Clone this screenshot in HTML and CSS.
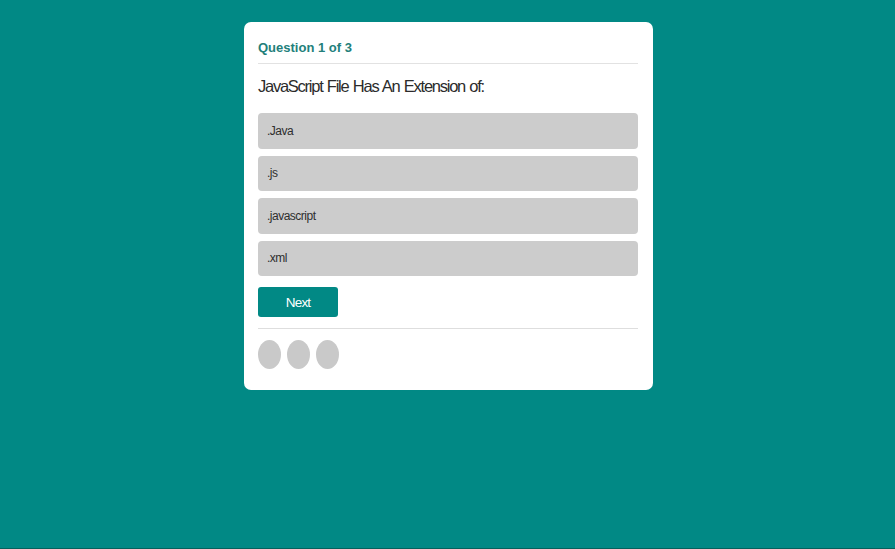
FILE: index.html
```html
<!DOCTYPE html>
<html lang="en">
<head>
<meta charset="utf-8">
<title>Quiz</title>
<link rel="stylesheet" href="styles.css">
</head>
<body>
<main class="page">
  <section class="card">
    <div class="qnum">Question 1 of 3</div>
    <h1 class="qtext">JavaScript File Has An Extension of:</h1>
    <ul class="options">
      <li class="option">.Java</li>
      <li class="option">.js</li>
      <li class="option">.javascript</li>
      <li class="option">.xml</li>
    </ul>
    <button class="next" type="button">Next</button>
    <div class="dots">
      <span class="dot"></span>
      <span class="dot"></span>
      <span class="dot"></span>
    </div>
  </section>
</main>
</body>
</html>
```
FILE: styles.css
```css
* { box-sizing: border-box; }
html, body {
  margin: 0;
  padding: 0;
  height: 100%;
}
body {
  background: #018985;
  font-family: "Liberation Sans", Arial, sans-serif;
  color: #333;
}
.page {
  display: flex;
  justify-content: center;
  padding: 22px 0 0 2px;
  height: 100%;
  border-bottom: 1px solid #04615d;
}
.card {
  width: 409px;
  height: 368px;
  background: #fff;
  border-radius: 7px;
  padding: 17px 15px 21px 14px;
  display: flex;
  flex-direction: column;
}
.qnum {
  font-size: 13px;
  font-weight: bold;
  color: #237f7b;
  line-height: 18px;
  padding-bottom: 6px;
  border-bottom: 1px solid #e2e2e2;
}
.qtext {
  margin: 12px 0 17px;
  font-size: 16.5px;
  font-weight: normal;
  line-height: 20px;
  color: #2b2b2b;
  letter-spacing: -1.25px;
  word-spacing: 1px;
}
.options {
  list-style: none;
  margin: 0;
  padding: 0;
  display: flex;
  flex-direction: column;
  gap: 7px;
}
.option {
  height: 35.5px;
  background: #cccccc;
  border-radius: 4px;
  padding: 0 9px;
  display: flex;
  align-items: center;
  font-size: 12px;
  letter-spacing: -0.5px;
  color: #2e2e2e;
}
.next {
  margin-top: 11px;
  width: 80px;
  height: 30px;
  border: none;
  border-radius: 3px;
  background: #018985;
  color: #fff;
  font-family: "Liberation Sans", Arial, sans-serif;
  font-size: 13.5px;
  letter-spacing: -0.8px;
  padding: 0;
}
.dots {
  margin-top: 11px;
  padding-top: 11px;
  border-top: 1px solid #dedede;
  display: flex;
  gap: 6px;
}
.dot {
  width: 23px;
  height: 29px;
  border-radius: 50%;
  background: #c9c9c9;
}
```
